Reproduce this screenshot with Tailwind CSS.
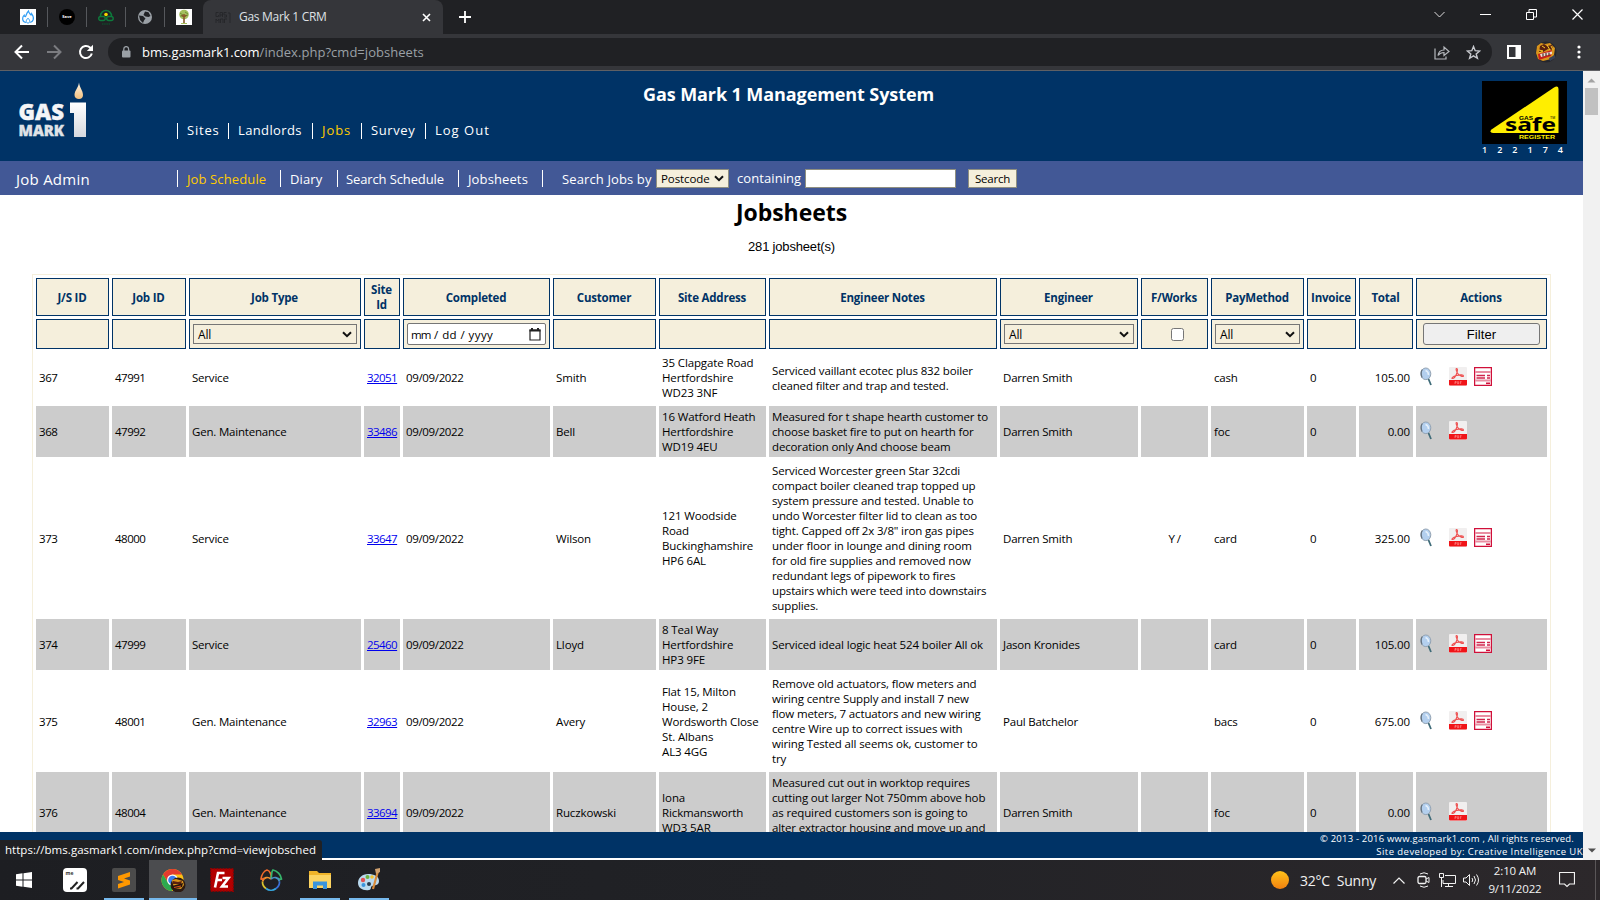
<!DOCTYPE html>
<html lang="en">
<head>
<meta charset="utf-8">
<title>Gas Mark 1 CRM</title>
<script src="https://cdn.jsdelivr.net/npm/@tailwindcss/browser@4"></script>
</head>
<body class="w-[1600px] h-[900px] overflow-hidden flex flex-col bg-white text-black font-['Open_Sans','Noto_Sans',sans-serif]">

<svg class="hidden">
  <symbol id="lens" viewBox="0 0 14 19"><path d="M9.300 11.500l2.700 6.500" stroke="#3f6b78" stroke-width="1.800"/><ellipse cx="6.800" cy="6.800" rx="5" ry="5.800" fill="#b3cfee" stroke="#93a3b3" stroke-width="1"/><path d="M3.300 2.500q-2 3-.3 8" stroke="#66737f" stroke-width="1.200" fill="none"/><path d="M6.500 3.500q3 1 3 4.500" stroke="#e6f1fb" stroke-width="1.500" fill="none"/></symbol>
  <symbol id="pdf" viewBox="0 0 18 19"><rect width="18" height="19" rx="1" fill="#f1efef"/><path d="M0 13h18v4.500a1 1 0 0 1-1 1H1a1 1 0 0 1-1-1z" fill="#f01418"/><path d="M7.500 1.500c1.500 0 1 3 0 5.500S5 11.500 3.500 11.500s0-2 4-3 7-.8 7 .4-3 .6-5-1.500-3-5.900-2-5.900z" fill="none" stroke="#ee4f4f" stroke-width="1.100"/><path d="M6 17v-2.500h1.200v1.200H6M8.700 14.500V17h.6q.7-1.200 0-2.500zM11.300 17v-2.500h1.200M11.300 15.800h1" stroke="#f88" stroke-width=".7" fill="none"/></symbol>
  <symbol id="inv" viewBox="0 0 18 19"><rect x=".6" y=".6" width="16.800" height="17.800" fill="#fff" stroke="#d0103a" stroke-width="1.300"/><path d="M1.200 5h15.600M1.200 13.500h15.600" stroke="#e98ea2" stroke-width="2"/><path d="M2.500 8.500H11M2.500 11H11M13 8.500h3M13 11h3" stroke="#d0244c" stroke-width="1.300"/><path d="M12 16.300h4" stroke="#d0103a" stroke-width="1.600"/></symbol>
  <symbol id="chev" viewBox="0 0 10 7"><path d="M1 1.200l4 4 4-4" fill="none" stroke="#111" stroke-width="2"/></symbol>
</svg>

<!-- tab strip -->
<header class="h-[34px] shrink-0 bg-[#202124] flex items-stretch">
  <div class="w-[203px] h-[34px] flex items-center pl-5">
    <svg class="size-4" viewBox="0 0 16 16"><rect width="16" height="16" fill="#fff"/><path d="M6 13.500C3.500 13 2.500 11 2.700 9c.2-1.500.9-2.300 1.500-2.800.1 1 .5 1.500 1.200 1.500C6.500 6.500 6.200 4 8.500 2c.2 2 1.500 2.500 2.500 4 .5-.3.700-.8.700-1.200 1.500 2 2.200 4 1.500 6-.5 1.500-1.500 2.400-3 2.700" fill="none" stroke="#2f9df5" stroke-width="1.200"/><path d="M8 14c-2.200 0-2.500-2.500 0-4.800 2.500 2.300 2.200 4.800 0 4.800z" fill="none" stroke="#2f9df5"/></svg>
    <div class="w-px h-5 bg-[#56585c] ml-[11px]"></div>
    <div class="size-4 rounded-full bg-black ml-[11px] flex items-center justify-center text-white text-[4px] font-bold">Save</div>
    <div class="w-px h-5 bg-[#56585c] ml-[11px]"></div>
    <svg class="size-4 ml-[11px]" viewBox="0 0 16 16"><path d="M2.500 7a5.500 5.500 0 0 1 11 0" fill="none" stroke="#0d7a3c" stroke-width="1.500"/><rect x="0.700" y="7.500" width="6.500" height="4" rx="2" fill="none" stroke="#0d7a3c" stroke-width="1.400"/><rect x="8.700" y="7.500" width="6.500" height="4" rx="2" fill="none" stroke="#0d7a3c" stroke-width="1.400"/><circle cx="8" cy="5.500" r="1.800" fill="#f5d800"/><path d="M4 15h8" stroke="#0b5a2e" stroke-width="1.200" stroke-dasharray="1.500 .7"/></svg>
    <div class="w-px h-5 bg-[#56585c] ml-[11px]"></div>
    <svg class="size-4 ml-[11px]" viewBox="0 0 16 16"><circle cx="8" cy="8" r="7" fill="#9aa0a6"/><path d="M2 6.500l4 .5 2.500 2.500-1.500 2-1 2.500-3-3zM8 2.500l3.500.8L13.500 7l-2 1-3-.5-2-1.500z" fill="#202124"/></svg>
    <div class="w-px h-5 bg-[#56585c] ml-[11px]"></div>
    <svg class="size-4 ml-[11px]" viewBox="0 0 16 16"><rect width="16" height="16" fill="#fff"/><circle cx="8" cy="5.500" r="4.800" fill="#a5c15e"/><path d="M4 4l3 2M9 3l3 2M4 7h3M9 7l3-1" stroke="#6f9436" stroke-width="1"/><path d="M8 5v9M8 8l-2.500-2M8 8l2.500-2" stroke="#8a5a2a" stroke-width="1.600"/><path d="M5 14.500h6" stroke="#a5c15e"/></svg>
  </div>
  <div class="w-[240px] bg-[#35363a] rounded-t-lg flex items-center pl-[12px]">
    <svg class="size-4" viewBox="0 0 16 16"><path d="M1 3.500h2.500M1 3.500v4h2.500V6M5 8V3.500h2.500V8M5 6h2.500M11.500 3.500H9V6h2.500v2H9M1 14v-4l1.500 2L4 10v4M5.500 14v-4H8v4M9.500 14v-4H12M13 4h2v10" fill="none" stroke="#26272a"/></svg>
    <span class="ml-[8px] text-[12px] tracking-[-0.300px] text-[#dfe1e5]">Gas Mark 1 CRM</span>
    <svg class="size-[9px] ml-auto mr-[12px]" viewBox="0 0 9 9"><path d="M1 1l7 7M8 1L1 8" stroke="#fff" stroke-width="1.600"/></svg>
  </div>
  <svg class="size-3 ml-[16px] mt-[11px]" viewBox="0 0 12 12"><path d="M6 0v12M0 6h12" stroke="#fff" stroke-width="1.800"/></svg>
  <div class="ml-auto flex items-start pt-[9px] pr-[17px]">
    <svg class="w-[11px] h-[11px] mr-[35px]" viewBox="0 0 11 11"><path d="M.5 3l5 5 5-5" fill="none" stroke="#ddd"/></svg>
    <svg class="w-[11px] h-[11px] mr-[35px]" viewBox="0 0 11 11"><path d="M0 5.500h11" stroke="#fff"/></svg>
    <svg class="w-[11px] h-[11px] mr-[35px]" viewBox="0 0 11 11"><path d="M.5 3.500h7v7h-7zM3 3V.5h7.500V8H8" fill="none" stroke="#fff"/></svg>
    <svg class="w-[11px] h-[11px]" viewBox="0 0 11 11"><path d="M.5.5l10 10M10.500.5l-10 10" stroke="#fff" stroke-width="1.200"/></svg>
  </div>
</header>

<!-- toolbar -->
<div class="h-[37px] shrink-0 bg-[#35363a] border-b border-[#5f6064] flex items-center pl-[14px]">
  <svg class="size-4" viewBox="0 0 16 16"><path d="M15 8H2M8 1.500L1.500 8 8 14.500" fill="none" stroke="#fff" stroke-width="2"/></svg>
  <svg class="size-4 ml-4" viewBox="0 0 16 16"><path d="M1 8h13M8 1.500L14.500 8 8 14.500" fill="none" stroke="#7b7c80" stroke-width="2"/></svg>
  <svg class="size-4 ml-4" viewBox="0 0 16 16"><path d="M13.800 9.500A6 6 0 1 1 12 3.600L14 5.500" fill="none" stroke="#fff" stroke-width="2"/><path d="M15 .8v6.200H8.800z" fill="#fff"/></svg>
  <div class="ml-[14px] w-[1384px] h-7 rounded-full bg-[#202124] flex items-center pl-[13px]">
    <svg class="w-[10px] h-3" viewBox="0 0 10 12"><rect x="1" y="4.500" width="8.500" height="7" rx="1" fill="#9aa0a6"/><path d="M2.800 5V3a2.300 2.300 0 0 1 4.800 0v2" fill="none" stroke="#9aa0a6" stroke-width="1.300"/></svg>
    <span class="ml-[11px] pt-[2px] text-[13px] tracking-[-0.050px] whitespace-nowrap text-white">bms.gasmark1.com<span class="text-[#9aa0a6] tracking-[0.040px]">/index.php?cmd=jobsheets</span></span>
    <svg class="w-4 h-[15px] ml-auto" viewBox="0 0 16 15"><path d="M1 3.500v10.500h11v-2.500" fill="none" stroke="#b5b8bd" stroke-width="1.200"/><path d="M4 10.500c.5-3.500 3-5.500 6-5.500V2l5 4.500-5 4V7.500c-2.500 0-4.500 1-6 3z" fill="none" stroke="#b5b8bd" stroke-width="1.200"/></svg>
    <svg class="size-[15px] ml-4 mr-[11px]" viewBox="0 0 15 15"><path d="M7.500 1.500l1.700 4.200 4.500.3-3.500 2.900 1.200 4.400-3.900-2.500-3.900 2.500 1.200-4.400L1.300 6l4.500-.3z" fill="none" stroke="#c8cacf" stroke-width="1.400"/></svg>
  </div>
  <svg class="size-[14px] ml-[15px]" viewBox="0 0 14 14"><path d="M0 0h14v14H0zM2 2v10h6.500V2z" fill="#fff" fill-rule="evenodd"/></svg>
  <svg class="size-[22px] ml-[14px]" viewBox="0 0 22 22"><circle cx="11" cy="11" r="10.500" fill="#25262c"/><path d="M2 5l4-3 4 1 5-1 5 5-1 7-3 4-8 2-5-2-2-6z" fill="#d9941c"/><path d="M5 5l4-2 3 2 5-1 1 5-5-1-5 3-4 0z" fill="#5a200f"/><path d="M4 9l4 1-4 2M12 4l3 5M16 5l2 4M7 5l3 2" stroke="#f7c92b" fill="none"/><path d="M3 13l14-4-1 6-12 4z" fill="#c81f1a"/><path d="M5 13l12-2.500v2.500l-11 3z" fill="#f0dcd0"/><path d="M8 12.500v3M11 12v3M14 11.500v3" stroke="#231512"/><path d="M14 17l6-3v3l-5 3z" fill="#3a4256"/></svg>
  <svg class="w-1 h-[14px] ml-[20px]" viewBox="0 0 4 14"><g fill="#fff"><circle cx="2" cy="2" r="1.600"/><circle cx="2" cy="7" r="1.600"/><circle cx="2" cy="12" r="1.600"/></g></svg>
</div>

<!-- viewport -->
<div class="h-[789px] shrink-0 flex">
  <div class="w-[1583px] h-full flex flex-col overflow-hidden">
    <div class="h-[90px] shrink-0 bg-[#003366] flex text-white">
      <svg class="w-[68px] h-[56px] ml-[18px] mt-[11px] shrink-0" viewBox="0 0 68 56">
        <defs><linearGradient id="w" x1="0" y1="0" x2="0" y2="1"><stop offset="0" stop-color="#fff"/><stop offset="1" stop-color="#d5d8de"/></linearGradient><linearGradient id="f" x1="0" y1="0" x2="0" y2="1"><stop offset="0" stop-color="#fff6e6"/><stop offset="1" stop-color="#f3bf7c"/></linearGradient></defs>
        <text x="0.500" y="37.500" font-family="Open Sans" font-weight="800" font-size="22.500" textLength="45.500" lengthAdjust="spacingAndGlyphs" fill="#f4f5f7" stroke="#f4f5f7" stroke-width=".4">GAS</text>
        <text x="0.500" y="54" font-family="Open Sans" font-weight="800" font-size="16.500" textLength="45.500" lengthAdjust="spacingAndGlyphs" fill="#dfe2e7" stroke="#dfe2e7" stroke-width=".4">MARK</text>
        <path d="M52 20.500h16V55H56V31h-4z" fill="url(#w)"/>
        <path d="M61 .5c.5 5 4 8 4 12.500 0 2.500-1.500 4-4 4s-4.500-1.500-4.500-4C56.500 8.500 60.500 5.500 61 .5z" fill="url(#f)"/>
      </svg>
      <div class="ml-[91px] w-[1305px] shrink-0 flex flex-col">
        <div class="h-[46px] pt-[1px] flex items-center pl-[466px] text-[18px] font-bold tracking-[-0.090px]">Gas Mark 1 Management System</div>
        <nav class="h-4 mt-[6px] flex text-[13px] leading-[14px] tracking-[0.800px] whitespace-nowrap">
          <a class="w-[51px] border-l pl-[9px] tracking-[0.800px]">Sites</a><a class="w-[84px] border-l border-white pl-[9px] tracking-[0.380px]">Landlords</a><a class="w-[49px] border-l border-white pl-[9px] tracking-[0.950px] text-[#ffcc00]">Jobs</a><a class="w-[64px] border-l border-white pl-[9px] tracking-[0.600px]">Survey</a><a class="border-l border-white pl-[9px] tracking-[1px]">Log Out</a>
        </nav>
      </div>
      <div class="mt-[10px] w-[85px] shrink-0">
        <svg class="w-[85px] h-[63px]" viewBox="0 0 85 63"><rect width="85" height="63" fill="#000"/><path d="M9.500 48.500L72 6.500q4.500-2.500 4.500 2V52H11q-4-.5-1.500-3.500z" fill="#ffee00"/><text x="23" y="49.500" font-family="Open Sans" font-weight="700" font-size="17.500" textLength="51" lengthAdjust="spacingAndGlyphs">safe</text><text x="37" y="38.500" font-family="Liberation Sans" font-weight="700" font-size="5" textLength="14" lengthAdjust="spacingAndGlyphs">GAS</text><text x="68" y="38" font-family="Liberation Sans" font-size="3.500">TM</text><text x="37" y="57.500" font-family="Liberation Sans" font-weight="700" font-size="5" textLength="36" lengthAdjust="spacingAndGlyphs" fill="#ffee00">REGISTER</text></svg>
        <div class="flex justify-between pr-[4px] text-[9px] leading-[12px] font-semibold"><span>1</span><span>2</span><span>2</span><span>1</span><span>7</span><span>4</span></div>
      </div>
    </div>
    <div class="h-[34px] shrink-0 bg-[#425896] flex items-center text-white text-[13px] whitespace-nowrap">
      <div class="w-[177px] pl-4 pt-[2px] text-[15px] tracking-[0.250px]">Job Admin</div>
      <nav class="h-[17px] leading-[18px] flex tracking-[0.120px]">
        <a class="w-[103px] border-l border-white pl-[9px] text-[#ffcc00]">Job Schedule</a><a class="w-[57px] border-l border-white pl-[9px]">Diary</a><a class="w-[121px] border-l border-white pl-[8px] tracking-[-0.120px]">Search Schedule</a><a class="w-[84px] border-l border-white pl-[9px]">Jobsheets</a><span class="w-[114px] border-l border-white pl-[19px]">Search Jobs by</span>
      </nav>
      <div class="w-[73px] h-[19px] mt-[1px] bg-[#f5efdc] border border-[#8f8f80] flex items-center pl-[4px] text-[11.500px] leading-[19px] tracking-[-0.100px] text-black">Postcode<svg class="w-[10px] h-[7px] ml-auto mr-[4px]"><use href="#chev"/></svg></div>
      <span class="w-[76px] pl-[8px] pt-[2px] tracking-[0.080px]">containing</span>
      <div class="w-[151px] h-[19px] mt-[1px] bg-white border border-[#8f8f80]"></div>
      <div class="ml-[12px] w-[49px] h-[19px] mt-[1px] bg-[#f5efdc] border border-[#8f8f80] text-center text-[11.500px] leading-[18px] tracking-[-0.250px] text-black">Search</div>
    </div>
    <main class="h-[637px] shrink-0 overflow-hidden">
      <h1 class="h-[36px] leading-[34px] text-center text-[23px] font-bold tracking-[-0.050px]">Jobsheets</h1>
      <p class="h-[43px] pt-[6px] leading-[20px] text-center text-[13px] tracking-[-0.180px] font-['Liberation_Sans',sans-serif]">281 jobsheet(s)</p>
      <table class="ml-[32px] w-[1519px] table-fixed border-separate border-spacing-[3px] border border-[#f5efdc] text-[11.500px] leading-[15px] tracking-[-0.200px] whitespace-nowrap">
        <colgroup><col class="w-[73px]"><col class="w-[74px]"><col class="w-[172px]"><col class="w-[36px]"><col class="w-[147px]"><col class="w-[103px]"><col class="w-[107px]"><col class="w-[228px]"><col class="w-[138px]"><col class="w-[67px]"><col class="w-[93px]"><col class="w-[49px]"><col class="w-[54px]"><col class="w-[131px]"></colgroup>
        <thead class="[&_th]:border [&_th]:border-[#003366] [&_th]:bg-[#f5efdc] [&_th]:p-0 text-[#003366]">
          <tr class="h-[38px] [&>th]:pr-[1px]"><th>J/S ID</th><th>Job ID</th><th>Job Type</th><th>Site<br>Id</th><th>Completed</th><th>Customer</th><th>Site Address</th><th>Engineer Notes</th><th>Engineer</th><th>F/Works</th><th>PayMethod</th><th>Invoice</th><th>Total</th><th>Actions</th></tr>
          <tr class="h-[30px] text-black font-normal [&_th]:font-normal"><th></th><th></th>
            <th><div class="mx-[3px] h-5 border border-[#767676] flex items-center pl-[4px] text-[12px]">All<svg class="w-[10px] h-[7px] ml-auto mr-[4px]"><use href="#chev"/></svg></div></th><th></th>
            <th><div class="mx-[3px] h-[22px] border border-[#767676] rounded-[2px] bg-white flex items-center pl-[3px] text-[11.500px]"><span class="tracking-[0.420px]"><span class="tracking-[-0.800px]">mm</span> / dd / yyyy</span><svg class="w-[12px] h-[13px] ml-auto mr-[4px]" viewBox="0 0 12 13"><path d="M1 2h10v10H1z" fill="none" stroke="#222" stroke-width="1.200"/><path d="M.5 1.500h11v2H.5zM2 0h2v2H2zM8 0h2v2H8z" fill="#222"/></svg></div></th><th></th><th></th><th></th>
            <th><div class="mx-[3px] h-5 border border-[#767676] flex items-center pl-[4px] text-[12px]">All<svg class="w-[10px] h-[7px] ml-auto mr-[4px]"><use href="#chev"/></svg></div></th>
            <th><div class="ml-[29px] size-[13px] border border-[#767676] rounded-[2.500px] bg-white"></div></th>
            <th><div class="mx-[3px] h-5 border border-[#767676] flex items-center pl-[4px] text-[12px]">All<svg class="w-[10px] h-[7px] ml-auto mr-[4px]"><use href="#chev"/></svg></div></th><th></th><th></th>
            <th><div class="mx-auto w-[117px] h-[22px] border border-[#767676] rounded-[3px] bg-[#efefef] leading-[21px] text-[13px] tracking-[0.100px] font-['Liberation_Sans',sans-serif]">Filter</div></th></tr>
        </thead>
        <tbody id="rows"></tbody>
      </table>
    </main>
    <footer class="h-[26px] shrink-0 bg-[#003366] text-white text-[9.500px] leading-[13px] whitespace-nowrap flex flex-col items-end">
      <span class="pr-[9px] tracking-[0.200px]">© 2013 - 2016 www.gasmark1.com , All rights reserved.</span><span class="tracking-[0.440px]">Site developed by: Creative Intelligence UK</span>
    </footer>
  </div>
  <div class="w-[17px] h-full bg-[#f1f1f1] flex flex-col items-center">
    <svg class="w-[9px] h-[5px] mt-[7px]" viewBox="0 0 8 5"><path d="M0 4.500L4 .5l4 4z" fill="#a3a3a3"/></svg>
    <div class="w-[13px] h-[27px] mt-[5px] bg-[#c1c1c1]"></div>
    <svg class="w-[8px] h-[5px] mt-auto mb-[7px]" viewBox="0 0 8 5"><path d="M0 .5l4 4 4-4z" fill="#505050"/></svg>
  </div>
</div>
<div class="absolute left-0 top-[840px] w-[322px] h-5 bg-[#202124] rounded-tr-[3px] pl-[5px] text-[11.500px] leading-5 text-white whitespace-nowrap tracking-[0.040px]">https://bms.gasmark1.com/index.php?cmd=viewjobsched</div>

<!-- taskbar -->
<footer class="h-10 shrink-0 bg-linear-to-r from-[#1d1e22] via-[#212226] to-[#2c282b] flex items-stretch text-[#f2f2f2]">
  <div class="w-12 flex items-center justify-center"><svg class="size-4" viewBox="0 0 16 16"><path d="M0 2.200l6.500-.9v6.200H0zM7.500 1.200L16 0v7.500H7.500zM0 8.500h6.500v6.200L0 13.800zM7.500 8.500H16V16l-8.500-1.200z" fill="#fff"/></svg></div>
  <div class="w-[54px] flex items-center justify-center"><svg class="size-6" viewBox="0 0 24 24"><rect width="24" height="24" rx="4" fill="#fff"/><text x="2.500" y="6.500" font-size="5" font-weight="700" font-family="Open Sans" fill="#333">me</text><path d="M7 20.500h1.500l6-6.500M13.500 20.500H15l6-6.500" fill="none" stroke="#222" stroke-width="2"/></svg></div>
  <div class="w-[40px] ml-[2px] flex items-center justify-center border-b-2 border-[#76b9ed]"><svg class="size-6 mt-[2px]" viewBox="0 0 24 24"><rect width="24" height="24" rx="2" fill="#4b4b4b"/><path d="M6 8l12-4v4.500l-6 2 6 2v4L6 20.500V16l6-2-6-2z" fill="#ff9800"/></svg></div>
  <div class="w-12 ml-[5px] flex items-center justify-center bg-[#4b4c4f] border-b-2 border-[#76b9ed]"><svg class="w-[25px] h-[24px] mt-[2px]" viewBox="0 0 25 24"><circle cx="11.500" cy="12" r="11" fill="#fbc116"/><path d="M2 6.500A11 11 0 0 1 21 6.500H11.500L7 14.500z" fill="#e33b2e"/><path d="M2 6.500a11 11 0 0 0 8.500 16.500l5-8.500H7z" fill="#2da94f"/><circle cx="11.500" cy="12" r="5.500" fill="#fff"/><circle cx="11.500" cy="12" r="4.300" fill="#3b7ded"/><circle cx="17" cy="17" r="7.500" fill="#2c1a12"/><path d="M11 12l4-1 7 2 1 4-3 4-7-1z" fill="#d9941c"/><path d="M12 13l5 1 4-1-1 3-8 0z" fill="#5a200f"/><path d="M11 18l11-3-1 4-9 2z" fill="#23130d"/><path d="M13 19.500l7-1.500" stroke="#d5501c" stroke-width="1.200"/></svg></div>
  <div class="w-[50px] flex items-center justify-center"><svg class="size-6" viewBox="0 0 24 24"><rect x=".7" y=".7" width="22.600" height="22.600" fill="#b30000" stroke="#8d0000" stroke-width="1.400" stroke-dasharray="1.500 1.500"/><path d="M5 19.500L8 5h6.500M6.500 12h5.500M12.500 10h6l-6.500 8.500h6" fill="none" stroke="#fff" stroke-width="2.600"/></svg></div>
  <div class="w-[48px] flex items-center justify-center"><svg class="size-6" viewBox="0 0 24 24" fill="none" stroke-width="1.700"><path d="M3.500 13.500a8 8 0 0 0 3.500 7" stroke="#d9c52e"/><path d="M7 20.500a8 8 0 0 0 10 0" stroke="#37a8e0"/><path d="M17 20.500a8 8 0 0 0 3.500-7" stroke="#3a70d8"/><path d="M3.500 13.500C5 9 9 8.500 12 11" stroke="#f0922e"/><path d="M12 10.500c1-3-1-8-4-8.500-3 1-5.500 5-6 9 1.500.5 2.500 0 3-1" stroke="#f26a2b"/><path d="M12 10.500c1-3 0-7 2-8.500 4 1 8 4.500 8.500 9-1.500 1-2.500 0-3.500-1" stroke="#36b56b"/><path d="M12 11c3-2.500 7-2 8.500 2.500" stroke="#4a90c8"/></svg></div>
  <div class="w-[40px] ml-[5px] flex items-center justify-center border-b-2 border-[#76b9ed]"><svg class="w-[22px] h-[20px] mt-[2px]" viewBox="0 0 22 20"><path d="M0 1h8l2 2h12v15H0z" fill="#f0b429"/><path d="M0 5h22v13H0z" fill="#fcd462"/><path d="M4 19v-7.500h14V19h-4v-3.500H8V19z" fill="#3a94dc"/></svg></div>
  <div class="w-[40px] ml-[9px] flex items-center justify-center border-b-2 border-[#76b9ed]"><svg class="w-6 h-6 mt-[2px]" viewBox="0 0 24 24"><path d="M11 6C5 6 1 10 1 15s5 8 11 7c3-.5 1-3 3-4s7 0 7-5-5-7-11-7z" fill="#b9d9ee"/><circle cx="6" cy="12" r="2.200" fill="#e05050"/><circle cx="10.500" cy="9" r="2" fill="#6db33f"/><circle cx="15" cy="9" r="1.800" fill="#f2c230"/><circle cx="6.500" cy="17" r="2" fill="#3a94dc"/><circle cx="12" cy="16" r="2" fill="#26394a"/><path d="M21 3l-5 18" stroke="#d88a3a" stroke-width="2.200"/><path d="M18 1l5-1v4l-4 2z" fill="#cfa06e"/></svg></div>
  <div class="ml-auto flex items-center whitespace-nowrap">
    <div class="size-[18px] rounded-full bg-linear-to-b from-[#ffc21a] to-[#f08010]"></div>
    <span class="ml-[11px] w-[93px] pt-[1px] text-[14px] tracking-[-0.220px]">32°C&nbsp; Sunny</span>
    <svg class="w-[12px] h-[7px]" viewBox="0 0 12 7"><path d="M.5 6.500L6 1l5.500 5.500" fill="none" stroke="#f2f2f2" stroke-width="1.200"/></svg>
    <svg class="w-[14px] h-[16px] ml-[12px]" viewBox="0 0 14 16" fill="none" stroke="#f2f2f2"><rect x="1" y="4.500" width="8" height="7" rx="1.500" stroke-width="1.300"/><path d="M9 7l3-1.500v5L9 9M3 2q4-2.500 8 0M3 14q4 2.500 8 0"/></svg>
    <svg class="w-[17px] h-[14px] ml-[8px]" viewBox="0 0 17 14" fill="none" stroke="#f2f2f2"><path d="M6 2.500h10.500v8H4V7M6 13.500h8M9.500 11v2.500M.5.500h4v4h-4zM2.500 5v9"/></svg>
    <svg class="w-[17px] h-[14px] ml-[7px]" viewBox="0 0 17 14" fill="none" stroke="#f2f2f2"><path d="M.5 5h2.500l3.500-3.500v11L3 9H.5zM9 5q1.500 2 0 4M11 3q3 4 0 8M13.500 1.500q4 5.500 0 11"/></svg>
    <div class="ml-[6px] w-[58px] text-center text-[11.500px] leading-[18px] tracking-[-0.150px]">2:10 AM<br>9/11/2022</div>
    <svg class="w-4 h-4 ml-[15px]" viewBox="0 0 16 16"><path d="M.5.500h15v11.500h-5L8 14.500 5.500 12h-5z" fill="none" stroke="#f2f2f2" stroke-width="1.200"/></svg>
    <div class="ml-[20px] mr-1 w-px h-10 bg-[#5a5658]"></div>
  </div>
</footer>

<script>
const jobs = [
  ['367','47991','Service','32051','Smith','35 Clapgate Road<br>Hertfordshire<br>WD23 3NF','Serviced vaillant ecotec plus 832 boiler<br>cleaned filter and trap and tested.','Darren Smith','','cash','105.00',1],
  ['368','47992','Gen. Maintenance','33486','Bell','16 Watford Heath<br>Hertfordshire<br>WD19 4EU','Measured for t shape hearth customer to<br>choose basket fire to put on hearth for<br>decoration only And choose beam','Darren Smith','','foc','0.00',0],
  ['373','48000','Service','33647','Wilson','121 Woodside<br>Road<br>Buckinghamshire<br>HP6 6AL','Serviced Worcester green Star 32cdi<br>compact boiler cleaned trap topped up<br>system pressure and tested. Unable to<br>undo Worcester filter lid to clean as too<br>tight. Capped off 2x 3/8" iron gas pipes<br>under floor in lounge and dining room<br>for old fire supplies and removed now<br>redundant legs of pipework to fires<br>upstairs which were teed into downstairs<br>supplies.','Darren Smith','Y /','card','325.00',1],
  ['374','47999','Service','25460','Lloyd','8 Teal Way<br>Hertfordshire<br>HP3 9FE','Serviced ideal logic heat 524 boiler All ok','Jason Kronides','','card','105.00',1],
  ['375','48001','Gen. Maintenance','32963','Avery','Flat 15, Milton<br>House, 2<br>Wordsworth Close<br>St. Albans<br>AL3 4GG','Remove old actuators, flow meters and<br>wiring centre Supply and install 7 new<br>flow meters, 7 actuators and new wiring<br>centre Wire up to correct issues with<br>wiring Tested all seems ok, customer to<br>try','Paul Batchelor','','bacs','675.00',1],
  ['376','48004','Gen. Maintenance','33694','Ruczkowski','Iona<br>Rickmansworth<br>WD3 5AR','Measured cut out in worktop requires<br>cutting out larger Not 750mm above hob<br>as required customers son is going to<br>alter extractor housing and move up and<br>&nbsp;','Darren Smith','','foc','0.00',0]
];
document.getElementById('rows').innerHTML = jobs.map(([js, job, type, site, cust, addr, notes, eng, fw, pay, total, inv]) => `
<tr class="even:[&>td]:bg-[#cccccc] [&>td]:p-[3px]">
<td class="tracking-[-0.400px]">${js}</td><td class="tracking-[-0.500px]">${job}</td><td>${type}</td><td><a class="text-[#0000ee] underline tracking-[-0.550px]">${site}</a></td><td class="tracking-[-0.350px]">09/09/2022</td><td class="tracking-[-0.140px]">${cust}</td><td class="tracking-[-0.120px]">${addr}</td><td class="tracking-[-0.140px]">${notes}</td><td>${eng}</td><td class="text-center tracking-[-0.500px]">${fw}</td><td>${pay}</td><td>0</td><td class="text-right tracking-[-0.100px]">${total}</td>
<td><div class="flex items-center h-[17px] pb-[2px]"><svg class="w-[14px] h-[19px]"><use href="#lens"/></svg><svg class="w-[18px] h-[19px] ml-[16px]"><use href="#pdf"/></svg>${inv ? '<svg class="w-[18px] h-[19px] ml-[7px]"><use href="#inv"/></svg>' : ''}</div></td></tr>`).join('');
</script>
</body>
</html>
